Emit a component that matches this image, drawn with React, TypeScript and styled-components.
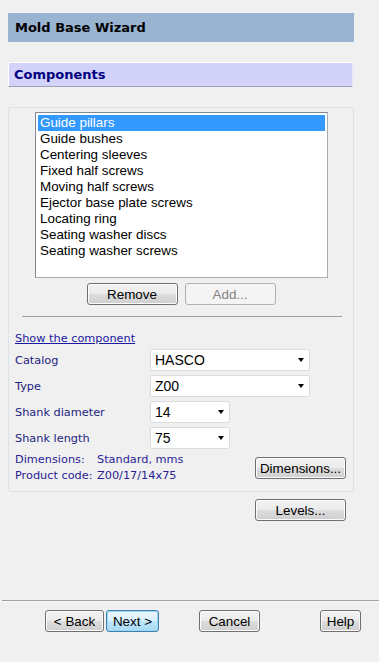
import React from "react";
import styled, { createGlobalStyle } from "styled-components";

const Global = createGlobalStyle`
  html, body { margin: 0; padding: 0; background: #f0f0f0; }
  * { box-sizing: border-box; }
`;

const Page = styled.div`
  width: 379px;
  height: 662px;
  display: flex;
  flex-direction: column;
  background: #f0f0f0;
  overflow: hidden;
`;

const TitleBar = styled.div`
  margin: 13px 0 0 8px;
  width: 346px;
  height: 29px;
  background: #99b4d1;
  display: flex;
  align-items: center;
  padding-left: 7px;
  font: bold 13px "DejaVu Sans", Verdana, sans-serif;
  color: #000;
`;

const SectionBar = styled.div`
  margin: 20px 0 0 8px;
  width: 345px;
  height: 25px;
  background: #d2d2fa;
  border-top: 1px solid #ffffff;
  border-left: 1px solid #ffffff;
  border-bottom: 1px solid #a0a0b4;
  border-right: 1px solid #e8e8f8;
  display: flex;
  align-items: center;
  padding-left: 5px;
  font: bold 13px "DejaVu Sans", Verdana, sans-serif;
  color: #000080;
`;

const Panel = styled.div`
  margin: 20px 0 0 8px;
  width: 346px;
  height: 385px;
  border: 1px solid #dde2e9;
  border-radius: 3px;
  padding: 4px 0 0 0;
  display: flex;
  flex-direction: column;
`;

const ListBox = styled.div`
  margin-left: 26px;
  width: 293px;
  height: 166px;
  background: #fff;
  border: 1px solid #828790;
  border-right-color: #a9acb2;
  border-bottom-color: #a9acb2;
  padding: 2px;
  display: flex;
  flex-direction: column;
`;

const ListItem = styled.div<{ $selected?: boolean }>`
  height: 16px;
  line-height: 16px;
  padding-left: 2px;
  font: 13.4px "Liberation Sans", Arial, sans-serif;
  color: ${(p) => (p.$selected ? "#fff" : "#000")};
  background: ${(p) => (p.$selected ? "#3399ff" : "transparent")};
  white-space: nowrap;
`;

const ButtonRow = styled.div`
  margin-top: 5px;
  display: flex;
  justify-content: center;
  gap: 7px;
`;

const Button = styled.button<{ $w: number; $ml?: number; $default?: boolean }>`
  width: ${(p) => p.$w}px;
  height: 22px;
  margin-left: ${(p) => p.$ml ?? 0}px;
  padding: 0;
  border: 1px solid ${(p) => (p.$default ? "#3c7fb1" : "#707070")};
  border-radius: 3px;
  background: ${(p) =>
    p.$default
      ? "linear-gradient(#eaf6fd 0%, #d9f0fc 50%, #bee6fd 51%, #a7d9f5 100%)"
      : "linear-gradient(#f2f2f2 0%, #ebebeb 50%, #dddddd 51%, #cfcfcf 100%)"};
  box-shadow: inset 0 0 0 1px ${(p) => (p.$default ? "#9ed6f3" : "#fcfcfc")};
  font: 13.4px "Liberation Sans", Arial, sans-serif;
  color: #000;
  flex: none;
  &:disabled {
    border-color: #adb2b5;
    background: #f4f4f4;
    box-shadow: none;
    color: #838383;
  }
`;

const Separator = styled.div`
  margin: 11px 11px 0 13px;
  height: 1px;
  background: #a0a0a0;
`;

const Link = styled.a`
  margin: 15px 0 0 6px;
  height: 14px;
  line-height: 14px;
  font: 11.3px "DejaVu Sans", Verdana, sans-serif;
  color: #1a1aa0;
  text-decoration: underline;
  align-self: flex-start;
`;

const Form = styled.div`
  margin: 3px 0 0 6px;
  display: grid;
  grid-template-columns: 135px auto;
  row-gap: 4px;
  align-items: center;
`;

const Label = styled.div`
  font: 11.3px "DejaVu Sans", Verdana, sans-serif;
  color: #1d1d80;
`;

const Select = styled.div<{ $w: number }>`
  width: ${(p) => p.$w}px;
  height: 22px;
  background: #fff;
  border: 1px solid #dcdcdc;
  border-radius: 2px;
  display: flex;
  align-items: center;
  justify-content: space-between;
  padding: 0 4px 0 4px;
  font: 14px "Liberation Sans", Arial, sans-serif;
  color: #000;
`;

const Arrow = styled.span`
  width: 0;
  height: 0;
  border-left: 3.5px solid transparent;
  border-right: 3.5px solid transparent;
  border-top: 4px solid #000;
  margin-right: 1px;
`;

const InfoRow = styled.div`
  margin: 3px 7px 0 6px;
  display: flex;
  align-items: center;
  justify-content: space-between;
`;

const Info = styled.div`
  display: grid;
  grid-template-columns: 82px auto;
  font: 11.3px "DejaVu Sans", Verdana, sans-serif;
  line-height: 16px;
  color: #2a1d96;
`;

const LevelsRow = styled.div`
  margin: 7px 0 0 255px;
`;

const Footer = styled.div`
  margin: 79px 0 0 2px;
  border-top: 1px solid #a0a0a0;
  border-bottom: 1px solid #fafafa;
`;

const NavRow = styled.div`
  margin-top: 8px;
  display: flex;
`;

const items = [
  "Guide pillars",
  "Guide bushes",
  "Centering sleeves",
  "Fixed half screws",
  "Moving half screws",
  "Ejector base plate screws",
  "Locating ring",
  "Seating washer discs",
  "Seating washer screws",
];

const fields: { label: string; value: string; w: number }[] = [
  { label: "Catalog", value: "HASCO", w: 160 },
  { label: "Type", value: "Z00", w: 160 },
  { label: "Shank diameter", value: "14", w: 80 },
  { label: "Shank length", value: "75", w: 80 },
];

export default function App() {
  return (
    <Page>
      <Global />
      <TitleBar>Mold Base Wizard</TitleBar>
      <SectionBar>Components</SectionBar>
      <Panel>
        <ListBox>
          {items.map((it, i) => (
            <ListItem key={it} $selected={i === 0}>
              {it}
            </ListItem>
          ))}
        </ListBox>
        <ButtonRow>
          <Button $w={91}>Remove</Button>
          <Button $w={91} disabled>
            Add...
          </Button>
        </ButtonRow>
        <Separator />
        <Link href="#">Show the component</Link>
        <Form>
          {fields.map((f) => (
            <React.Fragment key={f.label}>
              <Label>{f.label}</Label>
              <Select $w={f.w}>
                <span>{f.value}</span>
                <Arrow />
              </Select>
            </React.Fragment>
          ))}
        </Form>
        <InfoRow>
          <Info>
            <span>Dimensions:</span>
            <span>Standard, mms</span>
            <span>Product code:</span>
            <span>Z00/17/14x75</span>
          </Info>
          <Button $w={91}>Dimensions...</Button>
        </InfoRow>
      </Panel>
      <LevelsRow>
        <Button $w={91}>Levels...</Button>
      </LevelsRow>
      <Footer />
      <NavRow>
        <Button $w={59} $ml={45}>
          &lt; Back
        </Button>
        <Button $w={53} $ml={2} $default>
          Next &gt;
        </Button>
        <Button $w={61} $ml={40}>
          Cancel
        </Button>
        <Button $w={41} $ml={60}>
          Help
        </Button>
      </NavRow>
    </Page>
  );
}
